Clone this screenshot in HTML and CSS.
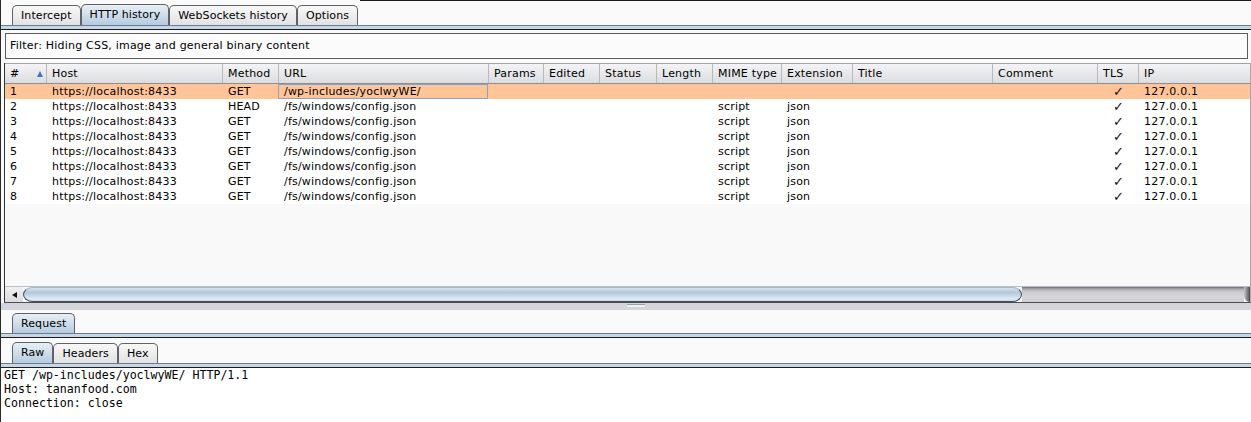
FILE: index.html
```html
<!DOCTYPE html>
<html>
<head>
<meta charset="utf-8">
<link rel="stylesheet" href="styles.css">
</head>
<body>
<div class="app">
  <div class="tabs top-tabs">
    <div class="tab">Intercept</div>
    <div class="tab active">HTTP history</div>
    <div class="tab">WebSockets history</div>
    <div class="tab">Options</div>
    <div class="tabs-fill"></div>
  </div>
  <div class="band"></div>
  <div class="filter">Filter: Hiding CSS, image and general binary content</div>
  <div class="pane">
    <div class="grid head">
      <div class="c num">#<span class="sort"></span></div>
      <div class="c">Host</div>
      <div class="c">Method</div>
      <div class="c">URL</div>
      <div class="c">Params</div>
      <div class="c">Edited</div>
      <div class="c">Status</div>
      <div class="c">Length</div>
      <div class="c">MIME type</div>
      <div class="c">Extension</div>
      <div class="c">Title</div>
      <div class="c">Comment</div>
      <div class="c">TLS</div>
      <div class="c">IP</div>
    </div>
    <div class="rows">
      <div class="grid row sel">
        <div class="c">1</div><div class="c">https://localhost:8433</div><div class="c">GET</div><div class="c focus">/wp-includes/yoclwyWE/</div><div class="c"></div><div class="c"></div><div class="c"></div><div class="c"></div><div class="c"></div><div class="c"></div><div class="c"></div><div class="c"></div><div class="c tls">✓</div><div class="c">127.0.0.1</div>
      </div>
      <div class="grid row">
        <div class="c">2</div><div class="c">https://localhost:8433</div><div class="c">HEAD</div><div class="c">/fs/windows/config.json</div><div class="c"></div><div class="c"></div><div class="c"></div><div class="c"></div><div class="c">script</div><div class="c">json</div><div class="c"></div><div class="c"></div><div class="c tls">✓</div><div class="c">127.0.0.1</div>
      </div>
      <div class="grid row">
        <div class="c">3</div><div class="c">https://localhost:8433</div><div class="c">GET</div><div class="c">/fs/windows/config.json</div><div class="c"></div><div class="c"></div><div class="c"></div><div class="c"></div><div class="c">script</div><div class="c">json</div><div class="c"></div><div class="c"></div><div class="c tls">✓</div><div class="c">127.0.0.1</div>
      </div>
      <div class="grid row">
        <div class="c">4</div><div class="c">https://localhost:8433</div><div class="c">GET</div><div class="c">/fs/windows/config.json</div><div class="c"></div><div class="c"></div><div class="c"></div><div class="c"></div><div class="c">script</div><div class="c">json</div><div class="c"></div><div class="c"></div><div class="c tls">✓</div><div class="c">127.0.0.1</div>
      </div>
      <div class="grid row">
        <div class="c">5</div><div class="c">https://localhost:8433</div><div class="c">GET</div><div class="c">/fs/windows/config.json</div><div class="c"></div><div class="c"></div><div class="c"></div><div class="c"></div><div class="c">script</div><div class="c">json</div><div class="c"></div><div class="c"></div><div class="c tls">✓</div><div class="c">127.0.0.1</div>
      </div>
      <div class="grid row">
        <div class="c">6</div><div class="c">https://localhost:8433</div><div class="c">GET</div><div class="c">/fs/windows/config.json</div><div class="c"></div><div class="c"></div><div class="c"></div><div class="c"></div><div class="c">script</div><div class="c">json</div><div class="c"></div><div class="c"></div><div class="c tls">✓</div><div class="c">127.0.0.1</div>
      </div>
      <div class="grid row">
        <div class="c">7</div><div class="c">https://localhost:8433</div><div class="c">GET</div><div class="c">/fs/windows/config.json</div><div class="c"></div><div class="c"></div><div class="c"></div><div class="c"></div><div class="c">script</div><div class="c">json</div><div class="c"></div><div class="c"></div><div class="c tls">✓</div><div class="c">127.0.0.1</div>
      </div>
      <div class="grid row">
        <div class="c">8</div><div class="c">https://localhost:8433</div><div class="c">GET</div><div class="c">/fs/windows/config.json</div><div class="c"></div><div class="c"></div><div class="c"></div><div class="c"></div><div class="c">script</div><div class="c">json</div><div class="c"></div><div class="c"></div><div class="c tls">✓</div><div class="c">127.0.0.1</div>
      </div>
    </div>
    <div class="hscroll">
      <div class="sb-left"><span class="arrow-left"></span></div>
      <div class="sb-thumb"></div>
      <div class="sb-track"></div>
      <div class="sb-right"></div>
    </div>
  </div>
  <div class="divider"><span class="grip"></span></div>
  <div class="tabs req-tabs">
    <div class="tab active">Request</div>
  </div>
  <div class="band"></div>
  <div class="tabs sub-tabs">
    <div class="tab active">Raw</div>
    <div class="tab">Headers</div>
    <div class="tab">Hex</div>
  </div>
  <div class="band"></div>
  <pre class="raw">GET /wp-includes/yoclwyWE/ HTTP/1.1
Host: tananfood.com
Connection: close</pre>
</div>
</body>
</html>
```

FILE: styles.css
```css
* { box-sizing: border-box; }
html, body { margin: 0; padding: 0; }
body {
  width: 1251px;
  height: 422px;
  overflow: hidden;
  background: #fafafa;
  font-family: "DejaVu Sans", sans-serif;
  font-size: 11px;
  letter-spacing: 0.2px;
  color: #000;
}
.app {
  height: 422px;
  border-left: 1px solid #2a2a2a;
  display: flex;
  flex-direction: column;
}
.tabs {
  display: flex;
  align-items: flex-end;
  padding-left: 11px;
  flex: none;
}
.top-tabs { height: 25px; }
.tabs-fill {
  flex: 1;
  align-self: stretch;
  border-top: 1px solid #1a1a1a;
  margin-left: 2px;
}
.req-tabs { height: 23px; }
.sub-tabs { height: 25px; }
.tab {
  height: 20px;
  padding: 0 8px;
  border: 1px solid #5f6267;
  border-bottom: none;
  border-radius: 5px 5px 0 0;
  background: linear-gradient(#f8f8f8, #e2e2e4);
  line-height: 19px;
  letter-spacing: 0.1px;
  white-space: nowrap;
}
.tab.active {
  height: 21px;
  line-height: 20px;
  background: linear-gradient(#e8eff6, #b6cbdf);
}
.req-tabs .tab.active { height: 20px; line-height: 19px; }
.band {
  flex: none;
  height: 5px;
  border-top: 1px solid #6c7c8e;
  border-bottom: 1px solid #1c1c1c;
  background: #c4d6e8;
}
.filter {
  flex: none;
  margin: 3px 3px 0 4px;
  height: 26px;
  border: 1px solid #5c5c5c;
  background: #fbfbfb;
  padding-left: 4px;
  line-height: 24px;
}
.pane {
  flex: none;
  margin: 4px 0 0 3px;
  height: 240px;
  border-left: 1px solid #333;
  border-right: 1px solid #a9a9a9;
  border-bottom: 1px solid #4a4d52;
  display: flex;
  flex-direction: column;
}
.grid {
  display: grid;
  grid-template-columns: 41px 176px 56px 210px 55px 56px 57px 56px 69px 71px 140px 105px 41px 112px;
}
.head {
  flex: none;
  height: 21px;
  border-top: 1px solid #a3a3a3;
  border-bottom: 1px solid #8e8e8e;
  background: linear-gradient(#f4f4f6, #dcdde0);
}
.head .c {
  border-left: 1px solid #b8b9bc;
  padding-left: 5px;
  line-height: 19px;
  white-space: nowrap;
  overflow: hidden;
}
.head .c:first-child { border-left: none; }
.head .num { display: flex; align-items: center; }
.sort {
  margin-left: auto;
  margin-right: 3px;
  width: 0;
  height: 0;
  border-left: 3.5px solid transparent;
  border-right: 3.5px solid transparent;
  border-bottom: 6px solid #3f78b4;
}
.rows {
  flex: 1;
  background: #f9f9f9;
}
.row {
  height: 15px;
  line-height: 15px;
  background: #fff;
}
.row.sel { background: #ffc599; }
.row .c {
  padding-left: 6px;
  white-space: nowrap;
  overflow: hidden;
}
.row .c:first-child { padding-left: 5px; }
.row .focus { box-shadow: inset 0 0 0 1px #7ea6d3; }
.row .tls {
  padding-left: 2px;
  text-align: center;
  font-size: 13px;
  line-height: 15px;
  color: #111;
}
.hscroll {
  flex: none;
  height: 16px;
  border-top: 1px solid #b7bfc8;
  display: flex;
}
.sb-left {
  width: 18px;
  background: linear-gradient(#f1f1f3, #dcdce0);
  display: flex;
  align-items: center;
  justify-content: center;
}
.arrow-left {
  width: 0;
  height: 0;
  border-top: 3px solid transparent;
  border-bottom: 3px solid transparent;
  border-right: 5px solid #111;
}
.sb-thumb {
  width: 999px;
  border: 1px solid #3e5062;
  border-top-color: #a9b9c7;
  border-radius: 10px / 8px;
  background: linear-gradient(#d5e2ec, #b2c8da 35%, #c8d9e7 60%, #e2ecf3 85%, #c6d6e3);
}
.sb-track {
  flex: 1;
  background: linear-gradient(#6b6b70, #a9a9ae 2px, #cdcdd2 5px, #d6d6da 10px, #cfcfd3);
}
.sb-right {
  width: 6px;
  background: linear-gradient(90deg, #c8c8cc, #4a4a4e);
  border-radius: 0 0 0 6px;
}
.divider {
  flex: none;
  height: 7px;
  background: #d3d5da;
  display: flex;
  justify-content: center;
  padding-left: 20px;
}
.grip {
  width: 18px;
  height: 3px;
  margin-top: 1px;
  border-top: 1px solid #9ca1a8;
  background: #eeeff1;
}
.raw {
  flex: 1;
  margin: 0;
  padding: 0 0 0 3px;
  background: #fff;
  font-family: "DejaVu Sans Mono", monospace;
  font-size: 11.6px;
  letter-spacing: 0;
  line-height: 14px;
  color: #000;
}
```
